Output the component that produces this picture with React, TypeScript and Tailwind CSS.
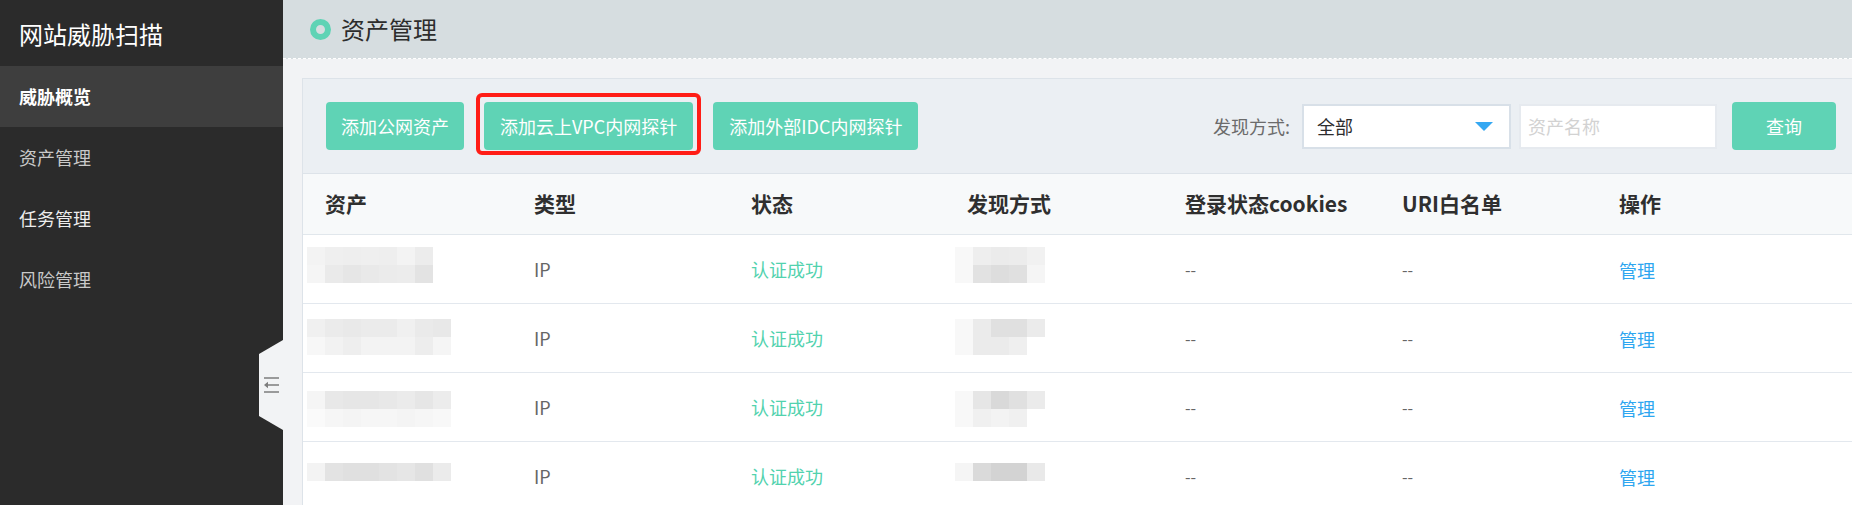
import React from "react";

// 资产管理页面：左侧深色导航 + 右侧工具栏与资产表格
const FONT = { fontFamily: '"Noto Sans CJK SC", "Noto Sans", sans-serif' };

const navItems = [
  { label: "威胁概览", active: true, tone: "text-white font-bold" },
  { label: "资产管理", active: false, tone: "text-[#c9c9c9]" },
  { label: "任务管理", active: false, tone: "text-[#ededed]" },
  { label: "风险管理", active: false, tone: "text-[#c9c9c9]" },
];

const columns = [
  { title: "资产", w: "w-[209px]" },
  { title: "类型", w: "w-[217px]" },
  { title: "状态", w: "w-[216px]" },
  { title: "发现方式", w: "w-[218px]" },
  { title: "登录状态cookies", w: "w-[217px]" },
  { title: "URI白名单", w: "w-[217px]" },
  { title: "操作", w: "flex-1" },
];

// 打码的资产名称 / 发现方式，用灰色马赛克块表示
const rows = [
  {
    top: "mt-[12px]",
    asset: [
      ["#f3f3f3", "#efefef", "#eeeeee", "#efefef", "#eeeeee", "#f3f3f3", "#ececec"],
      ["#f5f5f5", "#eaeaea", "#e6e6e6", "#e9e9e9", "#ebebeb", "#ececec", "#e3e3e3"],
    ],
    found: [
      ["#f8f8f8", "#eeeeee", "#ebebeb", "#ececec", "#f1f1f1"],
      ["#f8f8f8", "#e2e2e2", "#dddddd", "#e0e0e0", "#f5f5f5"],
    ],
  },
  {
    top: "mt-[15px]",
    asset: [
      ["#f0f0f0", "#ebebeb", "#e9e9e9", "#ebebeb", "#ebebeb", "#f0f0f0", "#eaeaea", "#e8e8e8"],
      ["#f7f7f7", "#f2f2f2", "#eeeeee", "#f3f3f3", "#f3f3f3", "#f3f3f3", "#ededed", "#f5f5f5"],
    ],
    found: [
      ["#f8f8f8", "#ebebeb", "#e0e0e0", "#e0e0e0", "#ebebeb"],
      ["#f8f8f8", "#ebebeb", "#ebebeb", "#efefef"],
    ],
  },
  {
    top: "mt-[18px]",
    asset: [
      ["#f5f5f5", "#e8e8e8", "#e6e6e6", "#e6e6e6", "#e8e8e8", "#ebebeb", "#e6e6e6", "#ececec"],
      ["#fafafa", "#f6f6f6", "#f4f4f4", "#f6f6f6", "#f6f6f6", "#f4f4f4", "#f6f6f6", "#f8f8f8"],
    ],
    found: [
      ["#f8f8f8", "#e6e6e6", "#d9d9d9", "#e0e0e0", "#ebebeb"],
      ["#f8f8f8", "#f0f0f0", "#f3f3f3", "#f0f0f0"],
    ],
  },
  {
    top: "mt-[21px]",
    asset: [["#f3f3f3", "#e3e3e3", "#e0e0e0", "#e0e0e0", "#e3e3e3", "#e6e6e6", "#e0e0e0", "#ebebeb"]],
    found: [["#f5f5f5", "#dadada", "#d3d3d3", "#d3d3d3", "#e9e9e9"]],
  },
];

function Mosaic({ blocks }: { blocks: string[][] }) {
  return (
    <div className="flex flex-col">
      {blocks.map((line, i) => (
        <div key={i} className="flex">
          {line.map((c, j) => (
            <div key={j} className="w-[18px] h-[18px]" style={{ backgroundColor: c }} />
          ))}
        </div>
      ))}
    </div>
  );
}

export default function App() {
  return (
    <div className="flex w-[1852px] h-[505px] overflow-hidden bg-[#f2f3f5]" style={FONT}>
      {/* 侧边栏 */}
      <aside className="w-[283px] shrink-0 bg-[#2b2b2b]">
        <div className="h-[66px] flex items-center pl-[19px] pt-[2px]">
          <span className="text-[24px] text-white leading-none">网站威胁扫描</span>
        </div>
        {navItems.map((item) => (
          <div
            key={item.label}
            className={`h-[61px] flex items-center pl-[19px] text-[18px] ${item.active ? "bg-[#3e3e3e]" : ""} ${item.tone}`}
          >
            {item.label}
          </div>
        ))}
      </aside>

      {/* 主区域 */}
      <main className="relative flex-1 flex flex-col min-w-0">
        {/* 收起侧边栏按钮 */}
        <div className="absolute left-[-24px] top-[340px] w-[24px] h-[90px]">
          <svg width="24" height="90" viewBox="0 0 24 90" aria-hidden="true">
            <polygon points="24,0 0,14 0,76 24,90" fill="#f2f3f5" />
            <path d="M5 38h15M5 52h15M20 45H8" stroke="#7d7d7d" strokeWidth="1.4" fill="none" />
            <path d="M5 45l4-3.2v6.4z" fill="#7d7d7d" />
          </svg>
        </div>

        <header className="h-[59px] shrink-0 bg-[#d6dde0] border-b border-dashed border-white flex items-center pl-[27px] gap-[10px]">
          <span className="w-[21px] h-[21px] rounded-full border-[6px] border-[#5fd3b5]" />
          <h1 className="text-[24px] text-[#2d2d2d] font-normal leading-none">资产管理</h1>
        </header>

        <section className="mt-[19px] ml-[19px] flex-1 border border-r-0 border-b-0 border-[#dde3e9] bg-white">
          {/* 工具栏 */}
          <div className="h-[95px] bg-[#ebeff3] border-b border-[#dde3e9] flex items-center pl-[23px] pr-[16px]">
            <div className="flex gap-[20px]">
              <button className="h-[48px] px-[15px] rounded-[4px] bg-[#5fd3b5] text-white text-[18px]">
                添加公网资产
              </button>
              <div className="relative">
                <button className="h-[48px] px-[16px] rounded-[4px] bg-[#5fd3b5] text-white text-[18px]">
                  添加云上VPC内网探针
                </button>
                <div className="absolute -inset-x-[8px] -top-[9px] -bottom-[5px] border-[4px] border-[#ff1d16] rounded-[6px]" />
              </div>
              <button className="h-[48px] px-[16px] rounded-[4px] bg-[#5fd3b5] text-white text-[18px]">
                添加外部IDC内网探针
              </button>
            </div>

            <div className="ml-auto flex items-center">
              <span className="text-[18px] text-[#6b6b6b] mr-[12px]">发现方式:</span>
              <div className="w-[209px] h-[45px] border-2 border-[#d8e0e8] bg-white flex items-center justify-between pl-[13px] pr-[16px]">
                <span className="text-[18px] text-[#2d2d2d]">全部</span>
                <svg width="18" height="9" viewBox="0 0 18 9" aria-hidden="true">
                  <polygon points="0,0 18,0 9,9" fill="#35a8f2" />
                </svg>
              </div>
              <div className="ml-[8px] w-[198px] h-[45px] border-2 border-[#e6eaef] bg-white flex items-center pl-[7px]">
                <span className="text-[18px] text-[#d2d2d2]">资产名称</span>
              </div>
              <button className="ml-[15px] w-[104px] h-[48px] rounded-[4px] bg-[#5fd3b5] text-white text-[18px]">
                查询
              </button>
            </div>
          </div>

          {/* 表头 */}
          <div className="h-[61px] flex items-center bg-[#f7f9fa] border-b border-[#e1e7ec]">
            {columns.map((col) => (
              <div key={col.title} className={`${col.w} pl-[22px] text-[21px] font-bold text-[#2f2f2f]`}>
                {col.title}
              </div>
            ))}
          </div>

          {/* 表格行 */}
          {rows.map((row, i) => (
            <div key={i} className="h-[69px] flex border-b border-[#e3e8ee] bg-white">
              <div className="w-[209px] pl-[4px]">
                <div className={row.top}>
                  <Mosaic blocks={row.asset} />
                </div>
              </div>
              <div className="w-[217px] pl-[22px] flex items-center text-[18px] text-[#666]">IP</div>
              <div className="w-[216px] pl-[22px] flex items-center text-[18px] text-[#52d2ae]">认证成功</div>
              <div className="w-[218px] pl-[10px]">
                <div className={row.top}>
                  <Mosaic blocks={row.found} />
                </div>
              </div>
              <div className="w-[217px] pl-[22px] flex items-center text-[16px] text-[#666]">--</div>
              <div className="w-[217px] pl-[22px] flex items-center text-[16px] text-[#666]">--</div>
              <div className="flex-1 pl-[22px] pt-[2px] flex items-center text-[18px] text-[#2ea6f0]">管理</div>
            </div>
          ))}
        </section>
      </main>
    </div>
  );
}
